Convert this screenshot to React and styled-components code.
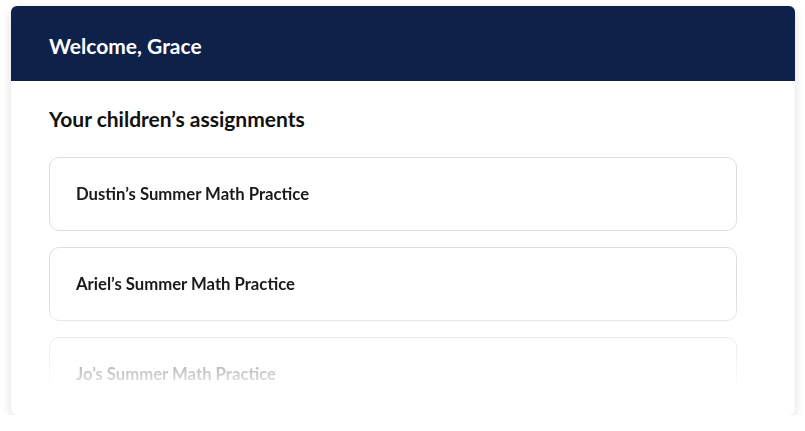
import React from "react";
import styled, { createGlobalStyle } from "styled-components";

const GlobalStyle = createGlobalStyle`
    body {
        margin: 0;
        background: #ffffff;
        font-family: Lato, "Open Sans", sans-serif;
    }
`;

const Page = styled.div`
    padding: 6px 10px 0 11px;
`;

const Card = styled.div`
    width: 784px;
    background: #ffffff;
    border-radius: 6px;
    overflow: hidden;
    box-shadow: 0 4px 12px rgba(0, 0, 0, 0.12), 0 0 2px rgba(0, 0, 0, 0.06);
`;

const Header = styled.div`
    height: 75px;
    box-sizing: border-box;
    background: #0e214b;
    display: flex;
    align-items: center;
    padding: 5px 38px 0;
`;

const HeaderTitle = styled.h1`
    margin: 0;
    color: #ffffff;
    font-size: 21px;
    font-weight: 700;
    line-height: 24px;
`;

const Body = styled.div`
    padding: 26px 58px 31px 38px;
`;

const SectionTitle = styled.h2`
    margin: 0 0 26px;
    color: #111111;
    font-size: 21px;
    font-weight: 700;
    line-height: 24px;
`;

const List = styled.div`
    display: flex;
    flex-direction: column;
    gap: 16px;
    height: 227px;
    overflow: hidden;
    -webkit-mask-image: linear-gradient(to bottom, #000 62%, rgba(0, 0, 0, 0.12) 100%);
    mask-image: linear-gradient(to bottom, #000 62%, rgba(0, 0, 0, 0.12) 100%);
`;

const Item = styled.div`
    flex: none;
    height: 74px;
    box-sizing: border-box;
    border: 1px solid #dedede;
    border-radius: 10px;
    display: flex;
    align-items: center;
    padding: 0 26px;
    font-size: 16.7px;
    font-weight: 700;
    color: #1a1a1a;
`;

const assignments = [
    "Dustin\u2019s Summer Math Practice",
    "Ariel\u2019s Summer Math Practice",
    "Jo\u2019s Summer Math Practice",
];

function App() {
    return (
        <>
            <GlobalStyle />
            <Page>
                <Card>
                    <Header>
                        <HeaderTitle>Welcome, Grace</HeaderTitle>
                    </Header>
                    <Body>
                        <SectionTitle>Your children&rsquo;s assignments</SectionTitle>
                        <List>
                            {assignments.map((name) => (
                                <Item key={name}>{name}</Item>
                            ))}
                        </List>
                    </Body>
                </Card>
            </Page>
        </>
    );
}

export default App;
